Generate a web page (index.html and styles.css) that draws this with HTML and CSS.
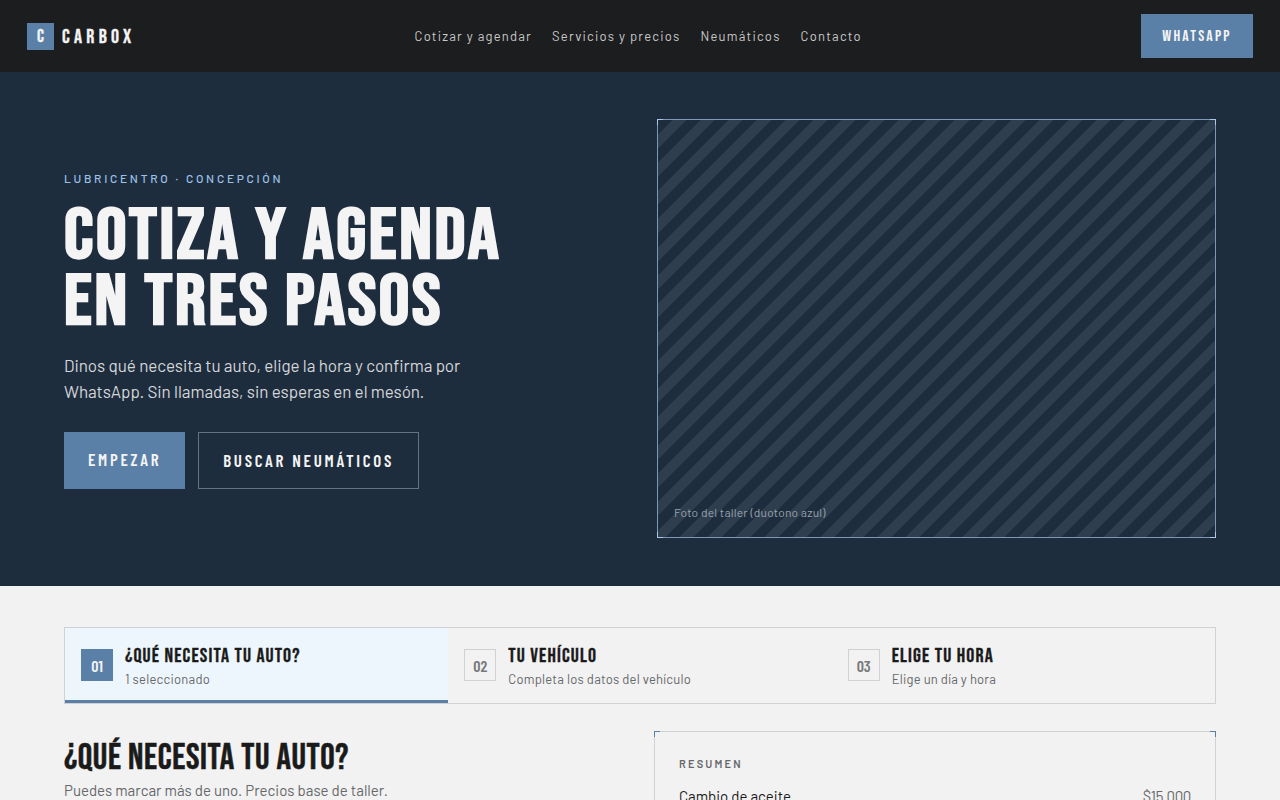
FILE: index.html
```html
<!DOCTYPE html>
<html lang="es">
<head>
    <meta charset="UTF-8">
    <meta name="viewport" content="width=device-width, initial-scale=1.0">
    <title>Carbox</title>
    <link rel="stylesheet" href="styles.css">
</head>
<body>
    <header class="topbar">
        <a class="brand" href="#"><span class="brand-mark">C</span><span class="brand-name">CARBOX</span></a>
        <nav class="topnav">
            <a href="#">Cotizar y agendar</a>
            <a href="#">Servicios y precios</a>
            <a href="#">Neumáticos</a>
            <a href="#">Contacto</a>
        </nav>
        <a class="wa-btn" href="#">WHATSAPP</a>
    </header>

    <section class="hero">
        <div class="hero-copy">
            <p class="eyebrow">LUBRICENTRO · CONCEPCIÓN</p>
            <h1>COTIZA Y AGENDA<br>EN TRES PASOS</h1>
            <p class="lead">Dinos qué necesita tu auto, elige la hora y confirma por WhatsApp. Sin llamadas, sin esperas en el mesón.</p>
            <div class="hero-actions">
                <a class="btn btn-solid" href="#">EMPEZAR</a>
                <a class="btn btn-ghost" href="#">BUSCAR NEUMÁTICOS</a>
            </div>
        </div>
        <div class="hero-photo">
            <span class="photo-note">Foto del taller (duotono azul)</span>
        </div>
    </section>

    <main class="booking">
        <ol class="steps">
            <li class="step active">
                <span class="step-num">01</span>
                <div><div class="step-title">¿QUÉ NECESITA TU AUTO?</div><div class="step-sub">1 seleccionado</div></div>
            </li>
            <li class="step">
                <span class="step-num">02</span>
                <div><div class="step-title">TU VEHÍCULO</div><div class="step-sub">Completa los datos del vehículo</div></div>
            </li>
            <li class="step">
                <span class="step-num">03</span>
                <div><div class="step-title">ELIGE TU HORA</div><div class="step-sub">Elige un día y hora</div></div>
            </li>
        </ol>

        <div class="booking-grid">
            <div>
                <h2>¿QUÉ NECESITA TU AUTO?</h2>
                <p class="section-sub">Puedes marcar más de uno. Precios base de taller.</p>
            </div>
            <aside class="summary">
                <div class="summary-label">RESUMEN</div>
                <div class="summary-row"><span>Cambio de aceite</span><span class="price">$15.000</span></div>
            </aside>
        </div>
    </main>
</body>
</html>
```

FILE: styles.css
```css
* {
    box-sizing: border-box;
}
html, body {
    height: 800px;
    overflow: hidden;
}
body {
    margin: 0;
    font-family: "Barlow", "Roboto", "Liberation Sans", sans-serif;
    background-color: #f2f2f2;
    color: #1a1a1a;
}
a {
    text-decoration: none;
    color: inherit;
}

/* top bar */
.topbar {
    height: 72px;
    padding: 0 27px;
    background: #1c1d1f;
    display: flex;
    justify-content: space-between;
    align-items: center;
}
.brand {
    display: flex;
    align-items: center;
    gap: 8px;
    color: #f4f4f4;
    font-family: "Bebas Neue", "Barlow Condensed", sans-serif;
    -webkit-text-stroke: 0.3px #f4f4f4;
}
.brand-mark {
    width: 27px;
    height: 27px;
    padding-top: 1px;
    background: #5b80a8;
    display: flex;
    align-items: center;
    justify-content: center;
    font-size: 18px;
}
.brand-name {
    padding-top: 2px;
    font-size: 20px;
    letter-spacing: 4.3px;
}
.topnav {
    display: flex;
    gap: 20px;
    font-size: 13px;
    letter-spacing: 1.19px;
    color: #c9c9c9;
}
.wa-btn {
    width: 112px;
    height: 44px;
    padding-top: 1px;
    background: #5b80a8;
    color: #f4f4f4;
    display: flex;
    align-items: center;
    justify-content: center;
    font-family: "Bebas Neue", "Barlow Condensed", sans-serif;
    font-size: 16px;
    letter-spacing: 2.2px;
}

/* hero */
.hero {
    height: 514px;
    padding: 47px 64px 48px;
    background: #1e2d3e;
    display: grid;
    grid-template-columns: 1fr 559px;
    gap: 34px;
    align-items: stretch;
}
.hero-copy {
    align-self: center;
    padding-top: 3px;
}
.eyebrow {
    margin: 0 0 19px;
    font-size: 12px;
    font-weight: 500;
    letter-spacing: 2.7px;
    color: #9cc0e6;
}
h1 {
    margin: 0 0 16px;
    font-family: "Bebas Neue", "Barlow Condensed", sans-serif;
    font-size: 72px;
    font-weight: 700;
    line-height: 66px;
    letter-spacing: 2.55px;
    color: #f4f4f4;
    transform: scaleX(1.06);
    transform-origin: left center;
}
.lead {
    margin: 0 0 28px;
    max-width: 420px;
    font-size: 17px;
    line-height: 26px;
    letter-spacing: -0.05px;
    color: #d4d6d9;
}
.hero-actions {
    display: flex;
    gap: 13px;
}
.btn {
    height: 57px;
    display: flex;
    align-items: center;
    font-family: "Barlow Condensed", sans-serif;
    font-weight: 600;
    font-size: 17px;
    letter-spacing: 2.72px;
    color: #f4f4f4;
}
.btn-solid {
    padding: 0 24px 3px;
    background: #5b80a8;
}
.btn-ghost {
    padding: 0 24px 1px;
    border: 1px solid #66727f;
}
.hero-photo {
    position: relative;
    border: 1px solid #7d98b5;
    background: repeating-linear-gradient(135deg, #1e2d3e 0, #1e2d3e 10px, #2f3e4f 10px, #2f3e4f 20px);
}
.hero-photo::before {
    content: "";
    position: absolute;
    inset: -1px;
    --tick: linear-gradient(#a9c8e8, #a9c8e8);
    background:
        var(--tick) 0 0 / 6px 1px no-repeat,
        var(--tick) 0 0 / 1px 6px no-repeat,
        var(--tick) 100% 0 / 6px 1px no-repeat,
        var(--tick) 100% 0 / 1px 6px no-repeat,
        var(--tick) 0 100% / 6px 1px no-repeat,
        var(--tick) 0 100% / 1px 6px no-repeat,
        var(--tick) 100% 100% / 6px 1px no-repeat,
        var(--tick) 100% 100% / 1px 6px no-repeat;
}
.photo-note {
    position: absolute;
    left: 16px;
    bottom: 18px;
    font-size: 12px;
    letter-spacing: 0.2px;
    color: #9aa3ad;
}

/* booking */
.booking {
    padding: 41px 64px 0;
}
.steps {
    margin: 0;
    padding: 0;
    list-style: none;
    display: grid;
    grid-template-columns: repeat(3, 1fr);
    border: 1px solid #cfd1d3;
}
.step {
    height: 75px;
    padding: 0 16px 1px;
    display: flex;
    align-items: center;
    gap: 12px;
}
.step.active {
    background: #eef6fd;
    box-shadow: inset 0 -3px 0 #5b80a8;
}
.step-num {
    width: 32px;
    height: 32px;
    border: 1px solid #cfd1d3;
    display: flex;
    align-items: center;
    justify-content: center;
    font-family: "Barlow Condensed", sans-serif;
    font-weight: 600;
    font-size: 16px;
    color: #77797c;
}
.active .step-num {
    background: #5b80a8;
    border-color: #5b80a8;
    color: #f4f4f4;
}
.step-title {
    padding-top: 2px;
    font-family: "Bebas Neue", "Barlow Condensed", sans-serif;
    font-size: 20px;
    letter-spacing: 1.15px;
    line-height: 24px;
    color: #1a1a1a;
    -webkit-text-stroke: 0.3px #1a1a1a;
}
.step-sub {
    margin-top: 2px;
    font-size: 13px;
    line-height: 18px;
    letter-spacing: 0.22px;
    color: #66686b;
}
.booking-grid {
    margin-top: 27px;
    display: grid;
    grid-template-columns: 1fr 562px;
    gap: 28px;
}
h2 {
    margin: 8px 0 2px;
    font-family: "Bebas Neue", "Barlow Condensed", sans-serif;
    font-size: 36px;
    font-weight: 400;
    line-height: 40px;
    letter-spacing: 0.65px;
    -webkit-text-stroke: 0.5px #1a1a1a;
}
.section-sub {
    margin: 0;
    font-size: 15px;
    color: #66686b;
}
.summary {
    position: relative;
    height: 200px;
    padding: 25px 24px 24px;
    border: 1px solid #cfd1d3;
}
.summary::before {
    content: "";
    position: absolute;
    inset: -1px;
    --tick: linear-gradient(#5b80a8, #5b80a8);
    background:
        var(--tick) 0 0 / 6px 1px no-repeat,
        var(--tick) 0 0 / 1px 6px no-repeat,
        var(--tick) 100% 0 / 6px 1px no-repeat,
        var(--tick) 100% 0 / 1px 6px no-repeat;
}
.summary-label {
    font-size: 11px;
    font-weight: 600;
    letter-spacing: 2.2px;
    color: #66686b;
}
.summary-row {
    margin-top: 17px;
    display: flex;
    justify-content: space-between;
    font-size: 15px;
}
.price {
    letter-spacing: -0.3px;
    color: #66686b;
}
```
